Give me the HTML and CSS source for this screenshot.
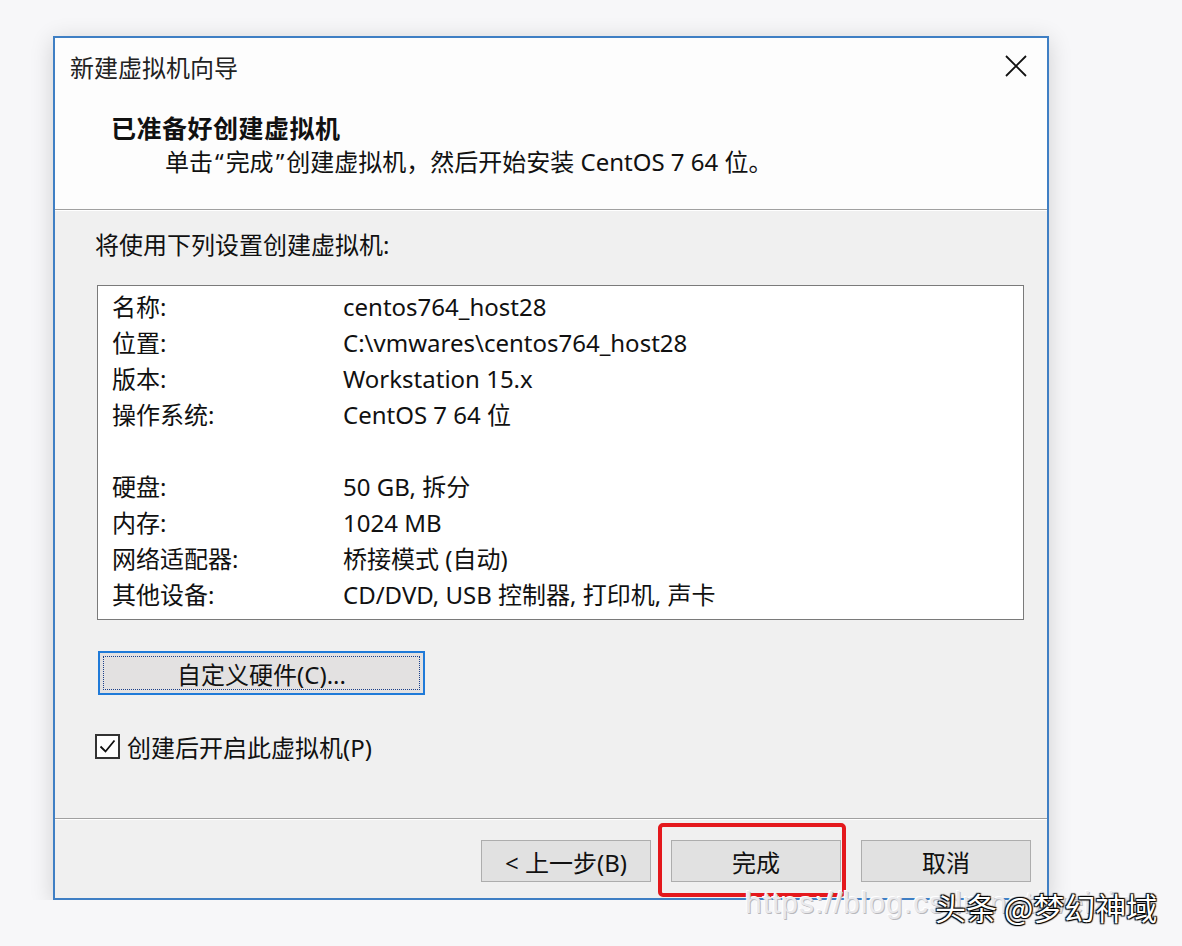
FILE: index.html
```html
<!DOCTYPE html>
<html lang="zh-CN">
    <head>
        <meta charset="UTF-8">
        <title>新建虚拟机向导</title>
        <link rel="stylesheet" href="styles.css">
    </head>
    <body>
        <div id="wizard">
            <!-- Header with title and close button -->
            <div class="wiz-head">
                <div class="title-bar">
                    <span class="title-txt">新建虚拟机向导</span>
                    <svg class="close-btn" width="22" height="22" viewBox="0 0 22 22">
                        <path d="M1 1 L21 21 M21 1 L1 21" stroke="#111" stroke-width="1.8" fill="none"/>
                    </svg>
                </div>
                <div class="heading">已准备好创建虚拟机</div>
                <div class="sub-heading">单击<span class="q">“</span>完成<span class="q">”</span>创建虚拟机，然后开始安装 CentOS 7 64 位。</div>
            </div>

            <!-- Summary of settings -->
            <div class="wiz-body">
                <div class="intro">将使用下列设置创建虚拟机:</div>
                <ul class="summary">
                    <li><span class="key">名称:</span><span class="val">centos764_host28</span></li>
                    <li><span class="key">位置:</span><span class="val">C:\vmwares\centos764_host28</span></li>
                    <li><span class="key">版本:</span><span class="val">Workstation 15.x</span></li>
                    <li><span class="key">操作系统:</span><span class="val">CentOS 7 64 位</span></li>
                    <li class="blank"></li>
                    <li><span class="key">硬盘:</span><span class="val">50 GB, 拆分</span></li>
                    <li><span class="key">内存:</span><span class="val">1024 MB</span></li>
                    <li><span class="key">网络适配器:</span><span class="val">桥接模式 (自动)</span></li>
                    <li><span class="key">其他设备:</span><span class="val">CD/DVD, USB 控制器, 打印机, 声卡</span></li>
                </ul>
                <div class="hw-btn"><span class="focus-ring">自定义硬件(C)...</span></div>
                <label class="power-on">
                    <span class="check-box">
                        <svg width="21" height="21" viewBox="0 0 21 21">
                            <path d="M3.5 10.5 L8.5 15.5 L17.5 4.5" stroke="#111" stroke-width="1.8" fill="none"/>
                        </svg>
                    </span>
                    创建后开启此虚拟机(P)
                </label>
            </div>

            <!-- Navigation buttons -->
            <div class="wiz-foot">
                <div class="nav-btn">&lt; 上一步(B)</div>
                <div class="nav-btn">完成</div>
                <div class="nav-btn">取消</div>
                <div class="mark-box"></div>
            </div>
        </div>

        <div class="stamp">
            <span class="stamp-url">https://blog.csdn.net/weixin</span>
            <span class="stamp-name">头条 @梦幻神域</span>
        </div>
    </body>
</html>
```

FILE: styles.css
```css
* {
    margin: 0;
    padding: 0;
    box-sizing: border-box;
}

body {
    font: 24px "Noto Sans", "Noto Sans CJK SC", sans-serif;
    color: #111;
    background-color: #f7f7f9;
    cursor: default;
}

#wizard {
    position: relative;
    display: flex;
    flex-direction: column;
    width: 996px;
    height: 864px;
    margin: 36px 0 0 53px;
    border: 2px solid #3f7fc4;
    background-color: #f0f0f0;
    box-shadow: 0 4px 22px rgba(0, 0, 0, 0.16);
}

.wiz-head {
    height: 172px;
    padding: 12px 0 0 15px;
    background-color: #fdfdfd;
    border-bottom: 1px solid #a0a0a0;
}

.title-bar {
    display: flex;
    justify-content: space-between;
    align-items: center;
    height: 32px;
    padding-right: 20px;
}

.title-txt {
    color: #222;
}

.heading {
    margin-top: 29px;
    padding-left: 41px;
    height: 34px;
    line-height: 34px;
    font-size: 25px;
    font-weight: bold;
    letter-spacing: 0.5px;
}

.sub-heading {
    height: 34px;
    line-height: 34px;
    padding-left: 95px;
}

.sub-heading .q {
    margin: 0 2px;
}

.wiz-body {
    flex: 1;
    padding: 18px 0 0 40px;
    border-top: 1px solid #fff;
    border-bottom: 1px solid #a0a0a0;
}

.intro {
    height: 32px;
    line-height: 32px;
}

.summary {
    width: 927px;
    height: 335px;
    margin: 24px 0 0 2px;
    padding: 3px 0 0 14px;
    list-style: none;
    background-color: #fff;
    border: 1px solid #7a7a7a;
}

.summary li {
    display: flex;
    height: 36px;
    line-height: 36px;
}

.summary .key {
    width: 231px;
}

.hw-btn {
    width: 327px;
    height: 44px;
    margin: 31px 0 0 3px;
    padding: 3px;
    border: 2px solid #1f7ad8;
    background-color: #e3e1e1;
}

.focus-ring {
    display: flex;
    justify-content: center;
    align-items: center;
    height: 100%;
    border: 1px dotted #1a3f8a;
}

.power-on {
    display: flex;
    align-items: center;
    gap: 7px;
    margin-top: 38px;
    height: 26px;
}

.check-box {
    display: flex;
    justify-content: center;
    align-items: center;
    width: 25px;
    height: 25px;
    border: 2px solid #333;
    background-color: #fff;
}

.wiz-foot {
    position: relative;
    display: flex;
    justify-content: flex-end;
    gap: 20px;
    height: 79px;
    padding: 20px 16px 0 0;
    border-top: 1px solid #fff;
}

.nav-btn {
    display: flex;
    justify-content: center;
    align-items: center;
    width: 170px;
    height: 42px;
    border: 1px solid #adadad;
    background-color: #e1e1e1;
}

.mark-box {
    position: absolute;
    left: 603px;
    top: 3px;
    width: 188px;
    height: 74px;
    border: 4px solid #e4181c;
    border-radius: 5px;
}

.stamp {
    position: absolute;
    left: 745px;
    top: 884px;
    height: 44px;
    width: 437px;
}

.stamp-url {
    position: absolute;
    left: 0;
    top: 2px;
    font: 30px "Liberation Sans", sans-serif;
    color: #e9e9ec;
    letter-spacing: 1px;
    text-shadow: 1px 1px 0 #b9b9bd, -1px -1px 0 #fff;
}

.stamp-name {
    position: absolute;
    left: 190px;
    top: 0;
    font: 31px "Noto Sans CJK SC", sans-serif;
    color: #fff;
    text-shadow: 1px 1px 1px #000, -1px -1px 1px #000, 1px -1px 1px #000, -1px 1px 1px #000;
}
```
